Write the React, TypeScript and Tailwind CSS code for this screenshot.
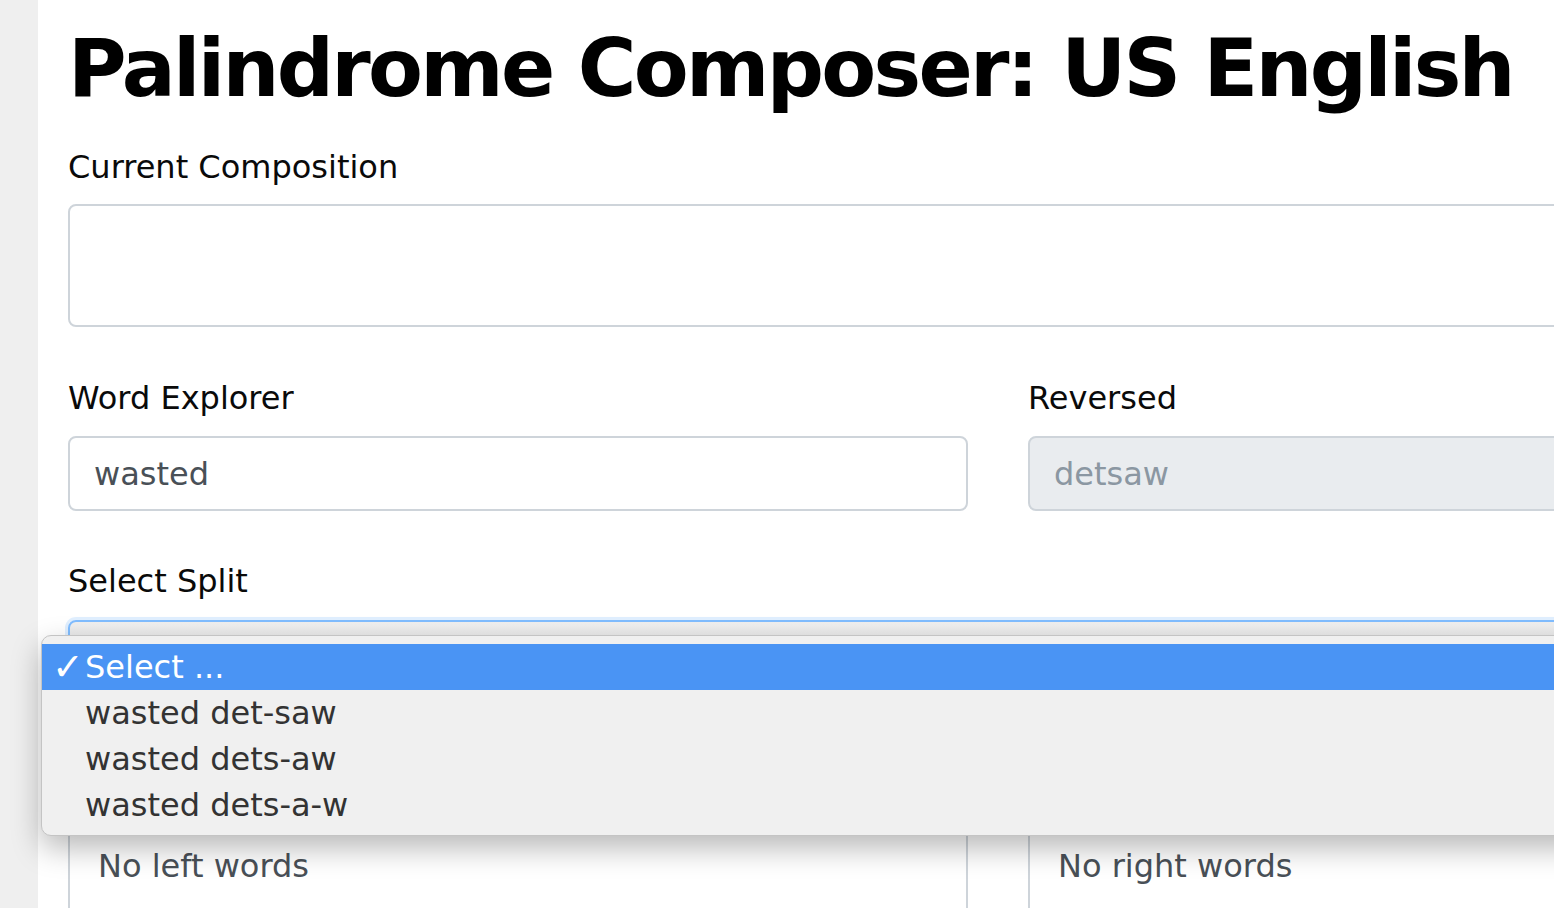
import React from "react";

export default function App() {
  const font = { fontFamily: '"DejaVu Sans", Verdana, sans-serif' };
  return (
    <div className="relative w-[1554px] h-[908px] overflow-hidden bg-white" style={font}>
      <div className="flex h-full">
        <div className="w-[38px] shrink-0 bg-[#efefef]" />
        <div className="w-[1890px] shrink-0 pl-[30px] pt-[21px]">
          <h1 className="text-[80px] leading-[96px] font-bold tracking-[-2.7px] text-black mb-[26px] whitespace-nowrap">
            Palindrome Composer: US English
          </h1>

          <div className="text-[32px] leading-[48px] text-[#0a0a0a] mb-[13px]">Current Composition</div>
          <div className="h-[123px] w-[1860px] border-2 border-[#ced4da] rounded-[8px] bg-white mb-[47px]" />

          <div className="flex gap-[60px] mb-[46px]">
            <div className="w-[900px]">
              <div className="text-[32px] leading-[48px] text-[#0a0a0a] mb-[14px]">Word Explorer</div>
              <div className="h-[75px] border-2 border-[#ced4da] rounded-[8px] bg-white px-[24px] flex items-center text-[32px] text-[#495057]">
                wasted
              </div>
            </div>
            <div className="w-[900px]">
              <div className="text-[32px] leading-[48px] text-[#0a0a0a] mb-[14px]">Reversed</div>
              <div className="h-[75px] border-2 border-[#ced4da] rounded-[8px] bg-[#e9ecef] px-[24px] flex items-center text-[32px] text-[#8b97a2]">
                detsaw
              </div>
            </div>
          </div>

          <div className="text-[32px] leading-[48px] text-[#0a0a0a] mb-[15px]">Select Split</div>
          <div className="h-[76px] w-[1860px] border-2 border-[#80bdff] rounded-[8px] bg-gradient-to-b from-[#f0f0f0] to-[#d6d6d6] shadow-[0_0_0_3px_rgba(0,123,255,0.12)] mb-[108px]" />

          <div className="flex gap-[60px]">
            <div className="w-[900px] h-[200px] border-2 border-[#ced4da] rounded-[8px] bg-white px-[28px] pt-[36px] text-[32px] leading-[48px] text-[#495057]">
              No left words
            </div>
            <div className="w-[900px] h-[200px] border-2 border-[#ced4da] rounded-[8px] bg-white px-[28px] pt-[36px] text-[32px] leading-[48px] text-[#495057]">
              No right words
            </div>
          </div>
        </div>
      </div>

      {/* native select popup */}
      <div className="absolute left-[41px] top-[635px] w-[1700px] h-[201px] bg-[#f0f0f0] border border-[#c4c4c4] rounded-[10px] py-[8px] shadow-[0_12px_30px_rgba(0,0,0,0.28)] text-[32px] leading-[46px]">
        <div className="h-[46px] bg-[#4a94f4] text-white flex items-center">
          <span className="w-[43px] pl-[10px] text-[38px] font-bold leading-[46px]">✓</span>
          <span>Select ...</span>
        </div>
        <div className="h-[46px] text-[#333] pl-[43px]">wasted det-saw</div>
        <div className="h-[46px] text-[#333] pl-[43px]">wasted dets-aw</div>
        <div className="h-[46px] text-[#333] pl-[43px]">wasted dets-a-w</div>
      </div>
    </div>
  );
}
